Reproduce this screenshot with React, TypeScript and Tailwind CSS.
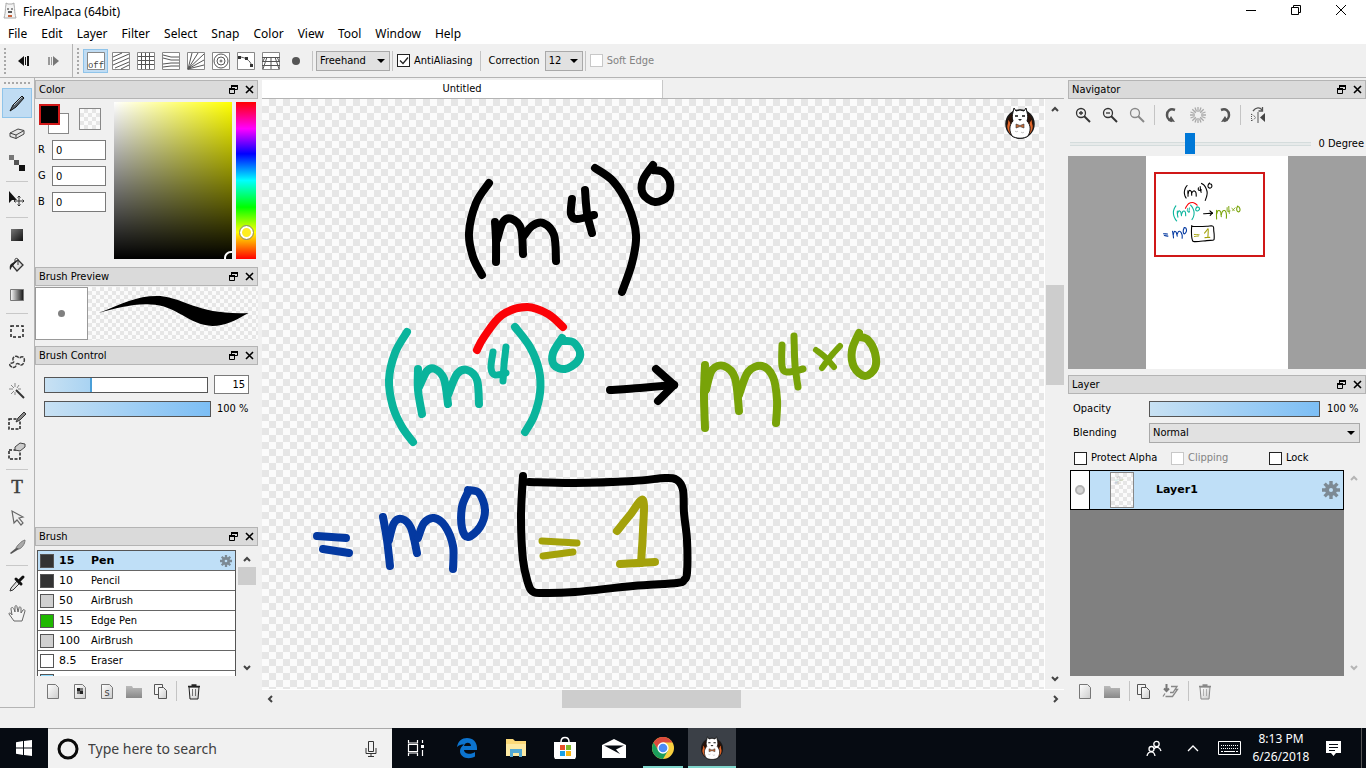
import React from "react";
import type { ReactNode } from "react";

type Pt = [number, number];
type Stroke = { c: string; w?: number; p: Pt[] };

const BLACK = "#000000";
const TEAL = "#0ab49c";
const GREEN = "#78a308";
const BLUE = "#0439a1";
const OLIVE = "#a4a20b";

const STROKES: Stroke[] = [
  { c: BLACK, p: [[489, 183], [476, 203], [469, 233], [473, 257], [482, 275]] },
  { c: BLACK, p: [[495, 222], [496, 240], [496, 262]] },
  { c: BLACK, p: [[497, 240], [503, 222], [512, 219], [521, 229], [523, 254]] },
  { c: BLACK, p: [[523, 237], [532, 226], [543, 223], [554, 235], [556, 261]] },
  { c: BLACK, p: [[572, 199], [571, 214], [577, 219], [594, 215]] },
  { c: BLACK, p: [[585, 190], [587, 213], [592, 233]] },
  { c: BLACK, p: [[595, 168], [613, 181], [628, 205], [636, 235], [632, 263], [622, 292]] },
  { c: BLACK, p: [[653, 165], [643, 180], [643, 194], [655, 202], [668, 196], [670, 182], [663, 172], [653, 170]] },
  { c: TEAL, p: [[407, 332], [395, 353], [389, 380], [393, 407], [402, 427], [413, 442]] },
  { c: TEAL, p: [[418, 369], [418, 390], [422, 414]] },
  { c: TEAL, p: [[419, 387], [427, 371], [435, 369], [444, 379], [448, 404]] },
  { c: TEAL, p: [[448, 395], [457, 374], [467, 370], [477, 380], [479, 404]] },
  { c: TEAL, w: 7, p: [[493, 352], [491, 368], [495, 375], [506, 373]] },
  { c: TEAL, w: 7, p: [[506, 347], [504, 365], [503, 381]] },
  { c: TEAL, p: [[515, 327], [530, 347], [539, 370], [540, 393], [534, 416], [525, 432]] },
  { c: TEAL, p: [[562, 338], [553, 353], [554, 365], [565, 369], [577, 362], [580, 352], [573, 342], [563, 341]] },
  { c: "#fb0207", p: [[477, 350], [484, 337], [502, 315], [527, 307], [548, 314], [563, 327]] },
  { c: BLACK, p: [[610, 390], [640, 388], [674, 385]] },
  { c: BLACK, p: [[656, 369], [674, 385]] },
  { c: BLACK, p: [[674, 385], [658, 401]] },
  { c: GREEN, p: [[705, 365], [704, 395], [705, 428]] },
  { c: GREEN, p: [[706, 390], [712, 370], [724, 366], [735, 378], [739, 411]] },
  { c: GREEN, p: [[739, 395], [748, 372], [762, 366], [773, 377], [777, 400], [776, 423]] },
  { c: GREEN, w: 7, p: [[782, 345], [782, 366], [787, 372], [803, 369]] },
  { c: GREEN, w: 7, p: [[794, 336], [795, 365], [798, 387]] },
  { c: GREEN, w: 6, p: [[816, 350], [825, 357], [834, 367]] },
  { c: GREEN, w: 6, p: [[840, 346], [831, 356], [822, 368]] },
  { c: GREEN, p: [[859, 333], [852, 350], [854, 367], [865, 376], [875, 368], [875, 353], [868, 340], [860, 337]] },
  { c: BLUE, p: [[317, 536], [346, 538]] },
  { c: BLUE, p: [[323, 549], [349, 553]] },
  { c: BLUE, p: [[383, 517], [387, 540], [390, 566]] },
  { c: BLUE, p: [[389, 540], [394, 523], [402, 519], [411, 528], [417, 553]] },
  { c: BLUE, p: [[418, 538], [424, 523], [434, 518], [445, 526], [453, 546], [453, 569]] },
  { c: BLUE, p: [[468, 492], [462, 507], [462, 528], [468, 537], [480, 527], [485, 510], [479, 493], [468, 490]] },
  { c: BLACK, p: [[523, 476], [521, 517], [523, 560], [528, 583], [532, 591], [542, 593], [575, 592], [633, 586], [677, 583], [684, 580], [687, 573], [687, 540], [684, 513], [683, 490], [677, 480], [665, 478], [633, 481], [575, 483], [529, 482]] },
  { c: OLIVE, w: 7, p: [[542, 541], [577, 543]] },
  { c: OLIVE, w: 7, p: [[543, 556], [573, 552]] },
  { c: OLIVE, p: [[617, 531], [630, 515], [643, 500], [643, 530], [641, 563]] },
  { c: OLIVE, p: [[620, 564], [655, 562]] },
];

// Catmull-Rom spline through the pen samples
function curve(p: Pt[]): string {
  let d = `M${p[0][0]} ${p[0][1]}`;
  for (let i = 0; i < p.length - 1; i++) {
    const a = p[i - 1] ?? p[i];
    const b = p[i];
    const c = p[i + 1];
    const e = p[i + 2] ?? c;
    d += `C${b[0] + (c[0] - a[0]) / 6} ${b[1] + (c[1] - a[1]) / 6} ${c[0] - (e[0] - b[0]) / 6} ${c[1] - (e[1] - b[1]) / 6} ${c[0]} ${c[1]}`;
  }
  return d;
}

function Drawing({ className }: { className: string }) {
  return (
    <svg viewBox="262 99 782 589" className={className} fill="none" strokeLinecap="round" strokeLinejoin="round">
      {STROKES.map((s, i) => (
        <path key={i} d={curve(s.p)} stroke={s.c} strokeWidth={s.w ?? 8} />
      ))}
    </svg>
  );
}

const CHECK = "bg-[repeating-conic-gradient(#e6e6e6_0_25%,#fbfbfb_0_50%)]";

function Svg({ size = 18, children }: { size?: number; children: ReactNode }) {
  return (
    <svg width={size} height={size} viewBox={`0 0 ${size} ${size}`} fill="none" className="block shrink-0">
      {children}
    </svg>
  );
}

function Llama({ size }: { size: number }) {
  return (
    <svg width={size} height={size} viewBox="0 0 32 32" className="block shrink-0">
      <circle cx="16" cy="17" r="14" fill="#2a1208" stroke="#1a1a1a" strokeWidth="1.500" />
      <path d="M4 23c-2-5 1-6 0-10 3 2 2 5 4 6 0-4 1-6 3-8v18c-4-1-6-3-7-6zM28 23c2-5-1-6 0-10-3 2-2 5-4 6 0-4-1-6-3-8v18c4-1 6-3 7-6z" fill="#e4672a" />
      <path d="M9 5l1-4 2 3 4-1 4 1 2-3 1 4c1 4 1 6 0 9 4 4 4 10 1 15-4 3-12 3-16 0-3-5-3-11 1-15-1-3-1-5 0-9z" fill="#fff" stroke="#111" strokeWidth="1" strokeLinejoin="round" />
      <path d="M11 9h3M18 9h3" stroke="#111" strokeWidth="1.400" />
      <path d="M14 12h4l-2 2z" fill="#222" />
      <path d="M12 17l4 1.500 4-1.500v4l-4-1.500-4 1.500z" fill="#c46a38" stroke="#333" strokeWidth=".6" />
      <path d="M11 24c1 1 2 1 3 0M17 25c1 1 2 1 3 0" stroke="#bbb" fill="none" />
    </svg>
  );
}

function PanelTitle({ children }: { children: ReactNode }) {
  return (
    <header className="flex h-[19px] shrink-0 items-center border border-[#b4b4b4] bg-[#dadada] pl-[3px]">
      <h2 className="grow truncate leading-4">{children}</h2>
      <button aria-label="Float panel" className="flex w-4 justify-center">
        <Svg size={9}>
          <path d="M2.500 3V.5h6v4H6" stroke="#000" />
          <path d="M2 1h7M0 4h6" stroke="#000" strokeWidth="2" />
          <path d="M.5 3.500h5v5h-5z" stroke="#000" />
        </Svg>
      </button>
      <button aria-label="Close panel" className="flex w-4 justify-center">
        <Svg size={9}><path d="M1 1l7 7M8 1L1 8" stroke="#000" strokeWidth="1.600" /></Svg>
      </button>
    </header>
  );
}

function Chevron({ dir, faint }: { dir: "up" | "down" | "left" | "right"; faint?: boolean }) {
  const d = { up: "M1 6l3-3 3 3", down: "M1 2l3 3 3-3", left: "M6 1L3 4l3 3", right: "M2 1l3 3-3 3" }[dir];
  return <Svg size={8}><path d={d} stroke={faint ? "#b5b5b5" : "#444"} strokeWidth="2" /></Svg>;
}

function Gear({ size }: { size: number }) {
  return (
    <svg width={size} height={size} viewBox="0 0 18 18" className="block">
      <g stroke="#7d8a94" strokeWidth="3.400">
        <path d="M9 0v18M0 9h18M2.600 2.600l12.800 12.800M15.400 2.600L2.600 15.400" />
      </g>
      <circle cx="9" cy="9" r="6" fill="#7d8a94" />
      <circle cx="9" cy="9" r="2" fill="#bfdff7" />
    </svg>
  );
}

function Grip() {
  return <span className="h-[26px] w-[2px] bg-[repeating-linear-gradient(#a8a8a8_0_2px,transparent_2px_4px)]" />;
}

const SNAPS: { name: string; art: ReactNode }[] = [
  { name: "Parallel", art: <path d="M1 5l9-4M1 9l16-7M1 13l16-7M3 16l14-6M9 17l8-4" /> },
  { name: "Grid", art: <path d="M4.500 1v16M8.500 1v16M12.500 1v16M1 4.500h16M1 8.500h16M1 12.500h16" /> },
  { name: "Vanishing line", art: <path d="M1 3l8 2h8M1 6l8 2h8M1 12l8-1h8M1 15l8-1h8" /> },
  { name: "Radial", art: <path d="M1 17L5 1M1 17L11 1M1 17L17 2M1 17l16-9M1 17l16-4" /> },
  { name: "Concentric", art: <><circle cx="9" cy="9" r="7" /><circle cx="9" cy="9" r="4" /><circle cx="9" cy="9" r="1" /></> },
  { name: "Curve", art: <><path d="M2 5c6 0 11 3 13 9" /><path d="M1 4h3v3H1zM8 5h3v3H8zM13 12h3v3h-3z" fill="#333" stroke="none" /></> },
  { name: "Perspective", art: <path d="M0 5.500h18M0 9.500h18M0 13.500h18M5 5l-4 12M9 5v12M13 5l4 12M3 5l-2 4M15 5l2 4" /> },
];

const T = "#3c3c3c";
const TOOLS: ({ name: string; art: ReactNode } | null)[] = [
  { name: "Brush", art: <><path d="M2 17l3-6 9-9 2 2-8 9z" fill="#59636c" stroke="#111" /><path d="M6 11L14 3" stroke="#b8c6d0" /></> },
  { name: "Eraser", art: <><path d="M2 9l8-4 6 1.500v3.500l-8 4.500-6-2z" fill="#e4e4e4" stroke="#444" /><path d="M2 9l6 2 8-4.500M8 11v3.500" stroke="#444" /></> },
  { name: "Dot", art: <><path d="M1 1h5v5H1z" fill="#777" /><path d="M6 6h5v5H6z" fill="#555" /><path d="M11 11h6v6h-6z" fill="#111" /></> },
  null,
  { name: "Move", art: <><path d="M1 1v12l3-3 5 0z" fill="#111" /><path d="M11 6v10M6 11h10M9.500 7.500L11 6l1.500 1.500M9.500 14.500L11 16l1.500-1.500M7.500 9.500L6 11l1.500 1.500M14.500 9.500L16 11l-1.500 1.500" stroke="#333" /></> },
  null,
  { name: "Fill shape", art: <path d="M3 3h12v12H3z" fill="url(#dark)" /> },
  { name: "Bucket", art: <><path d="M4 9l6-5 5 5-6 6z" fill="url(#paper)" stroke="#333" strokeWidth="1.300" /><path d="M7 7V3.500c0-1.500 3-1.500 3 0V9" stroke="#333" /><path d="M9 4L3 8c-2 2-1 5-1 6 1 0 1-3 3-4z" fill="#222" /></> },
  { name: "Gradient", art: <path d="M2.500 3.500h13v11h-13z" fill="url(#ramp)" stroke="#777" /> },
  null,
  { name: "Select", art: <path d="M3 4h12v11H3z" stroke="#222" strokeWidth="1.500" strokeDasharray="3 2" /> },
  { name: "Lasso", art: <path d="M4 15c-3-1-3-4 0-4 2 0 2-2 1-3-1-3 3-5 5-3 1 1 2 1 3 0 3-1 4 2 3 5s-3 4-5 2c-2-1-3 0-3 1 0 2-2 3-4 2z" stroke={T} strokeWidth="1.500" strokeDasharray="4 1" /> },
  { name: "Magic wand", art: <><path d="M8 8l8 8" stroke="#333" strokeWidth="2" /><path d="M7 1v4M1 7h4M3 3l3 3M11 3L9 6M3 12l3-3M7 10v3M10 7h3" stroke="#888" /></> },
  { name: "Select pen", art: <><path d="M1 7h11v10H1z" stroke="#222" strokeWidth="1.500" strokeDasharray="3 1.500" /><path d="M8 10l2-4 6-6 2 2-6 6z" fill="#888" stroke="#333" /></> },
  { name: "Select eraser", art: <><path d="M1 8h11v9H1z" stroke="#222" strokeWidth="1.500" strokeDasharray="3 1.500" /><path d="M7 5l5-4 5 1v3l-5 4-5-1z" fill="#ccc" stroke="#444" /></> },
  null,
  { name: "Text", art: <text x="9" y="15" textAnchor="middle" fontSize="19" fill={T} stroke={T} strokeWidth=".5" className="font-['Liberation_Serif',serif]">T</text> },
  { name: "Operation", art: <path d="M4 3l2 12 3-3 4 5 2-2-4-5 4-1z" fill="#eee" stroke="#666" strokeWidth="1.200" /> },
  { name: "Divide", art: <><path d="M17 2c-4 1-8 6-9 8l3 1c3-1 6-5 6-9z" fill="#aaa" stroke="#777" /><path d="M8 10l-6 5 1 1 8-5z" fill="#555" /></> },
  null,
  { name: "Eyedropper", art: <><path d="M9 7l-6 7-1 3 3-1 6-6z" fill="#ddd" stroke="#333" /><path d="M8 5l5 5M11 7l4-4" stroke="#111" strokeWidth="3" strokeLinecap="round" /></> },
  { name: "Hand", art: <path d="M6 17l-5-7c0-2 2-1 3 1L3 5c0-2 2-2 3 0l1 3V3c0-2 2-2 2 0l1 5 1-4c0-2 2-1 2 0v5l2-3c1-1 2 0 2 1l-3 10z" fill="#f3f3f3" stroke="#666" /> },
];

const BRUSHES = [
  { size: "15", name: "Pen", on: true, swatch: "bg-[#333]" },
  { size: "10", name: "Pencil", swatch: "bg-[#333]" },
  { size: "50", name: "AirBrush", swatch: "bg-[#d0d0d0]" },
  { size: "15", name: "Edge Pen", swatch: "bg-[#1fb800]" },
  { size: "100", name: "AirBrush", swatch: "bg-[#d0d0d0]" },
  { size: "8.5", name: "Eraser", swatch: "bg-white" },
  { size: "", name: "", swatch: "bg-[#8fdcff]" },
];

const page = <path d="M3.500 2.500h8l3 3v11h-11z" fill="url(#paper)" stroke="#777" />;
const folder = <path d="M1 4h6l1 2h9v10H1z" fill="url(#fold)" />;
const copy = <><path d="M2.500 2.500h8v10h-8z" fill="#f4f4f4" stroke="#555" /><path d="M6.500 5.500h5l3 3v8h-8z" fill="url(#paper)" stroke="#555" /></>;
const trash = (c: string) => <><path d="M4 5l1 12h8l1-12z" fill="url(#paper)" stroke={c} /><path d="M3 4.500h12M6.500 3h5" stroke={c} strokeWidth="1.300" /><path d="M7.500 7v7M10.500 7v7" stroke={c} opacity=".6" /></>;

function IconBtn({ label, children }: { label: string; children: ReactNode }) {
  return (
    <button aria-label={label} className="flex w-[27px] justify-center"><Svg size={18}>{children}</Svg></button>
  );
}

function Divider() {
  return <span className="block h-5 w-px bg-[#c4c4c4]" />;
}

const BAR = "block appearance-none border border-[#555] [&::-webkit-slider-thumb]:w-0 [&::-webkit-slider-thumb]:appearance-none";

function Tick({ label, checked, disabled, className = "" }: { label: string; checked?: boolean; disabled?: boolean; className?: string }) {
  return (
    <label className={`flex items-center gap-1 whitespace-nowrap leading-4 ${disabled ? "text-[#838383]" : ""} ${className}`}>
      <span className="grid">
        <input type="checkbox" defaultChecked={checked} disabled={disabled} className="col-start-1 row-start-1 size-[13px] appearance-none border border-[#222] bg-white disabled:border-[#c8c8c8]" />
        {checked && (
          <svg viewBox="0 0 13 13" className="pointer-events-none col-start-1 row-start-1 size-[13px]"><path d="M3 6.500l3 3 5-6" stroke="#222" fill="none" strokeWidth="1.300" /></svg>
        )}
      </span>
      {label}
    </label>
  );
}

function Drop({ label, value, className }: { label: string; value: string; className: string }) {
  return (
    <span className={`grid items-center ${className}`}>
      <select aria-label={label} className="col-start-1 row-start-1 h-5 w-full appearance-none border border-[#a9a9a9] bg-[#e1e1e1] pl-[3px] leading-4">
        <option>{value}</option>
      </select>
      <svg viewBox="0 0 8 4" className="pointer-events-none col-start-1 row-start-1 mr-[5px] h-1 w-2 justify-self-end"><path d="M0 0h8L4 4z" /></svg>
    </span>
  );
}

function TitleBar() {
  return (
    <header className="flex h-6 items-start bg-white pr-[2px] pl-[3px] font-['Noto_Sans',sans-serif] text-[12px]">
      <svg width="14" height="20" viewBox="0 0 14 20">
        <path d="M3 5V3l2 1h4l2-1v2c1 3 0 6 2 13H1C3 11 2 8 3 5z" fill="#f4f4f4" stroke="#aaa" />
        <path d="M4 9h2M8 9h2" stroke="#333" /><path d="M5 11h4v2H5z" fill="#555" /><path d="M5 15h4v2H5z" fill="#c8623a" />
      </svg>
      <h1 className="ml-[6px] grow pt-1 leading-4">FireAlpaca (64bit)</h1>
      <button aria-label="Minimize" className="flex h-5 w-[45px] items-center justify-center"><Svg size={10}><path d="M0 5.500h10" stroke="#000" /></Svg></button>
      <button aria-label="Restore" className="flex h-5 w-[45px] items-center justify-center"><Svg size={10}><path d="M2.500 2V.5h7v7H8M.5 2.500h7v7h-7z" stroke="#000" /></Svg></button>
      <button aria-label="Close" className="flex h-5 w-[46px] items-center justify-center"><Svg size={12}><path d="M1 1l10 10M11 1L1 11" stroke="#000" /></Svg></button>
    </header>
  );
}

function MenuBar() {
  const items = ["File", "Edit", "Layer", "Filter", "Select", "Snap", "Color", "View", "Tool", "Window", "Help"];
  return (
    <nav className="flex h-5 items-center gap-[14px] bg-white pl-2 font-['Noto_Sans',sans-serif] text-[12px] leading-4">
      {items.map((m) => <button key={m}>{m}</button>)}
    </nav>
  );
}

function ToolOptions() {
  return (
    <div className="flex h-[34px] items-center border-b border-[#b4b4b4] pl-1 leading-4">
      <Grip />
      <div className="flex h-full w-[67px] items-center justify-around border-r border-[#b4b4b4] px-[3px]">
        <button aria-label="Undo"><Svg size={12}><path d="M6 1v10L0 6z" fill="#111" /><path d="M7 2h1v8H7zM9 1h2v10H9z" fill="#111" /></Svg></button>
        <button aria-label="Redo"><Svg size={12}><path d="M5 1v10l6-5z" fill="#777" /><path d="M0 2h2v8H0zM3 2h1v8H3z" fill="#999" /></Svg></button>
      </div>
      <span className="w-1" />
      <Grip />
      <div className="ml-1 flex items-center">
        <button aria-label="Snap off" className="flex h-6 w-[25px] items-center justify-center border border-[#8fc4ea] bg-[#c0dcf3]">
          <svg width="18" height="18" viewBox="0 0 18 18"><path d="M.5.5h17v17H.5z" fill="#fff" stroke="#888" /><text x="9" y="16" textAnchor="middle" fontSize="9" fill="#444" className="font-['Liberation_Mono',monospace]">off</text></svg>
        </button>
        {SNAPS.map((s) => (
          <button key={s.name} aria-label={s.name} className="flex w-[25px] justify-center">
            <Svg size={18}><path d="M.5.5h17v17H.5z" fill="#fff" stroke="#888" /><g stroke="#555">{s.art}</g></Svg>
          </button>
        ))}
        <button aria-label="Snap settings" className="flex w-[25px] justify-center"><Svg size={8}><circle cx="4" cy="4" r="4" fill="#555" /></Svg></button>
      </div>
      <span className="mr-[3px] ml-1"><Divider /></span>
      <Drop label="Stroke type" value="Freehand" className="w-[74px]" />
      <span className="mr-1 ml-[2px]"><Divider /></span>
      <Tick label="AntiAliasing" checked />
      <span className="mr-[7px] ml-2"><Divider /></span>
      <span>Correction</span>
      <Drop label="Correction" value="12" className="ml-[5px] w-[38px]" />
      <span className="mr-1 ml-[2px]"><Divider /></span>
      <Tick label="Soft Edge" disabled />
    </div>
  );
}

function ToolBox() {
  return (
    <aside className="flex w-[35px] shrink-0 flex-col items-center border-r border-b border-[#b4b4b4] pt-1">
      <span className="h-[2px] w-[26px] bg-[repeating-linear-gradient(90deg,#a8a8a8_0_2px,transparent_2px_4px)]" />
      <div className="mt-1 flex w-full flex-col px-[2px]">
        {TOOLS.map((t, i) =>
          t ? (
            <button key={i} aria-label={t.name} className={`flex h-[30px] items-center justify-center ${i === 0 ? "border border-[#8fc4ea] bg-[#c0dcf3]" : ""}`}>
              <Svg size={18}>{t.art}</Svg>
            </button>
          ) : (
            <span key={i} className="flex h-[6px] items-center px-1"><span className="h-px w-full bg-[#c8c8c8]" /></span>
          ),
        )}
      </div>
    </aside>
  );
}

function LeftDock() {
  return (
    <aside className="flex w-[223px] shrink-0 flex-col pt-[2px]">
      <PanelTitle>Color</PanelTitle>
      <section className="flex h-[168px] gap-1 pt-[3px] pr-[2px] pl-[3px]">
        <div className="w-[72px]">
          <div className="flex items-start">
            <div className="grid">
              <span className="col-start-1 row-start-1 mt-[11px] ml-[10px] size-[21px] border border-[#888] bg-white" />
              <span className="z-10 col-start-1 row-start-1 mt-[2px] ml-px size-[21px] border-2 border-[#d01818] bg-black" />
            </div>
            <span className={`mt-[6px] ml-[10px] size-[22px] border border-[#888] bg-[length:8px_8px] ${CHECK}`} />
          </div>
          <div className="mt-[6px] flex flex-col gap-[6px]">
            {["R", "G", "B"].map((c) => (
              <label key={c} className="flex h-5 items-center">
                <span className="w-[14px]">{c}</span>
                <input defaultValue="0" className="h-5 w-[54px] border border-[#7a7a7a] bg-white px-[3px] leading-4" />
              </label>
            ))}
          </div>
        </div>
        <div className="relative h-[157px] grow overflow-hidden bg-[linear-gradient(to_top,#000,transparent),linear-gradient(to_right,#fff,#ff0)]">
          <span className="absolute -right-[6px] -bottom-[6px] size-[14px] rounded-full border-2 border-white" />
        </div>
        <div className="relative h-[157px] w-5 bg-[linear-gradient(#f00,#f0f_17%,#00f_33%,#0ff_50%,#0f0_67%,#ff0_83%,#f00)]">
          <span className="absolute top-[124px] left-1 size-[13px] rounded-full border-2 border-white bg-[#ffee20] outline outline-[#888]" />
        </div>
      </section>

      <PanelTitle>Brush Preview</PanelTitle>
      <section className="flex h-[60px] pt-px">
        <div className="flex size-[53px] items-center justify-center border border-[#999] bg-white"><span className="size-[7px] rounded-full bg-[#808080]" /></div>
        <div className={`h-[53px] grow bg-[length:8px_8px] ${CHECK}`}>
          <svg viewBox="0 0 169 53" className="size-full"><path d="M10 26C35 16 50 8 72 9c26 3 38 19 88 17-14 8-24 13-36 13C100 38 88 18 62 17.500c-18-1-34 4-52 8.500z" /></svg>
        </div>
      </section>

      <PanelTitle>Brush Control</PanelTitle>
      <section className="flex h-[162px] flex-col gap-2 pt-[11px] pr-2 pl-[9px] leading-4">
        <div className="flex h-[17px] items-center gap-[6px]">
          <input type="range" aria-label="Brush size" defaultValue={29} className={`${BAR} h-4 w-[164px] bg-[linear-gradient(to_right,#c8e1f3,#a9d3f2_28%,#4a9fd8_28%,#4a9fd8_29%,#fff_29%)]`} />
          <input aria-label="Size" defaultValue="15" className="h-[19px] w-[35px] border border-[#7a7a7a] bg-white pr-[3px] text-right" />
        </div>
        <div className="flex h-4 items-center gap-[6px]">
          <input type="range" aria-label="Brush opacity" defaultValue={100} className={`${BAR} h-4 w-[167px] bg-[linear-gradient(to_right,#c8e1f3,#7cbef5)]`} />
          <span className="whitespace-nowrap">100 %</span>
        </div>
      </section>

      <PanelTitle>Brush</PanelTitle>
      <section className="flex h-[131px] pt-1 pl-[2px]">
        <ul className="h-[126px] grow overflow-hidden border-x border-t border-[#555] leading-4">
          {BRUSHES.map((b, i) => (
            <li key={i} className={`flex h-5 items-center border-b border-[#666] pl-[2px] ${b.on ? "bg-[#bfdff7] font-['DejaVu_Sans',sans-serif] font-bold" : "bg-white"}`}>
              <span className={`size-[14px] border border-[#555] ${b.swatch}`} />
              <span className="w-[37px] pl-[5px] font-['DejaVu_Sans',sans-serif]">{b.size}</span>
              <span className="grow">{b.name}</span>
              {b.on && <span className="mr-[3px]"><Gear size={12} /></span>}
            </li>
          ))}
        </ul>
        <div className="flex w-[22px] flex-col items-center py-[5px]">
          <Chevron dir="up" />
          <span className="mt-1 h-[18px] w-[18px] bg-[#cdcdcd]" />
          <span className="grow" />
          <Chevron dir="down" />
        </div>
      </section>
      <section className="flex items-center py-1 pl-1">
        <IconBtn label="New brush">{page}</IconBtn>
        <IconBtn label="New bitmap brush">{page}<path d="M6 6h3v3H6zM9 9h3v3H9z" fill="#222" /><path d="M9 6h3v3H9zM6 9h3v3H6z" fill="#777" /></IconBtn>
        <IconBtn label="New script brush">{page}<text x="9" y="14" textAnchor="middle" fontSize="11" fill="#444">s</text></IconBtn>
        <IconBtn label="New folder">{folder}</IconBtn>
        <IconBtn label="Duplicate brush">{copy}</IconBtn>
        <span className="ml-[2px]"><Divider /></span>
        <span className="ml-[3px] flex"><IconBtn label="Delete brush">{trash("#222")}</IconBtn></span>
      </section>
    </aside>
  );
}

function CanvasArea() {
  return (
    <main className="mx-1 flex min-w-0 grow flex-col pt-[2px]">
      <div className="flex h-[19px] border-b border-[#b4b4b4]">
        <button className="w-1/2 border-r border-[#c8c8c8] bg-white text-center leading-4">Untitled</button>
      </div>
      <div className="flex grow">
        <div className={`relative min-w-0 grow bg-[length:14px_14px] ${CHECK}`}>
          <Drawing className="block h-auto w-full" />
          <span className="absolute top-2 right-2"><Llama size={32} /></span>
        </div>
        <div className="flex w-[20px] flex-col items-center border-l border-white py-[6px]">
          <Chevron dir="up" />
          <span className="h-[172px]" />
          <span className="h-[100px] w-[18px] bg-[#cdcdcd]" />
          <span className="grow" />
          <Chevron dir="down" />
        </div>
      </div>
      <div className="flex h-[19px] items-center border-t border-white px-1">
        <Chevron dir="left" />
        <span className="grow-[287]" />
        <span className="h-[18px] w-[179px] bg-[#cdcdcd]" />
        <span className="grow-[310]" />
        <Chevron dir="right" />
      </div>
    </main>
  );
}

function Magnifier({ c, sign }: { c: string; sign?: string }) {
  return <><circle cx="7" cy="7" r="4.500" stroke={c} strokeWidth="1.300" fill="#eee" /><path d="M10 10l6 6" stroke={c} strokeWidth="2" />{sign && <path d={sign} stroke={c} strokeWidth="1.300" />}</>;
}

function RightDock() {
  return (
    <aside className="flex w-[298px] shrink-0 flex-col pt-[2px] leading-4">
      <PanelTitle>Navigator</PanelTitle>
      <section className="flex h-8 items-center pl-[1px]">
        <IconBtn label="Zoom in"><Magnifier c="#333" sign="M5 7h4M7 5v4" /></IconBtn>
        <IconBtn label="Zoom out"><Magnifier c="#333" sign="M5 7h4" /></IconBtn>
        <IconBtn label="Fit"><Magnifier c="#888" /></IconBtn>
        <span className="ml-1"><Divider /></span>
        <span className="ml-[2px] flex">
          <IconBtn label="Rotate left"><path d="M13 4C8 2 5 5 5 9s2 5 5 6" stroke="#555" strokeWidth="2.500" /><path d="M6 15l7 1-4-6z" fill="#555" /></IconBtn>
          <IconBtn label="Reset rotation">
            <g stroke="#aaa" strokeWidth="1.300"><path d="M9 1v5M9 12v5M1 9h5M12 9h5M3.300 3.300l3.500 3.500M11.200 11.200l3.500 3.500M3.300 14.700l3.500-3.500M11.200 6.800l3.500-3.500M6 1.500l1.500 4M10.500 12.500l1.500 4M1.500 12l4-1.500M12.500 7.500l4-1.500M12 1.500l-1.500 4M7.500 12.500L6 16.500M1.500 6l4 1.500M12.500 10.500l4 1.500" /></g>
          </IconBtn>
          <IconBtn label="Rotate right"><path d="M5 4c5-2 8 1 8 5s-2 5-5 6" stroke="#555" strokeWidth="2.500" /><path d="M12 15l-7 1 4-6z" fill="#555" /></IconBtn>
        </span>
        <span className="ml-[2px]"><Divider /></span>
        <span className="ml-[3px] flex"><IconBtn label="Flip view"><path d="M9 6v11" stroke="#555" /><path d="M16 7v9l-5-4.500z" fill="#444" /><path d="M2.500 8v7L7 11.500z" stroke="#555" strokeDasharray="1 1" /><path d="M4 5c3-4 7-4 9-1M13.500 1v4h-4" stroke="#555" strokeWidth="1.300" /></IconBtn></span>
      </section>
      <section className="flex h-[25px] items-center pr-[2px] pl-[2px]">
        <input type="range" aria-label="Rotation" min={-180} max={180} defaultValue={0} className="h-[21px] min-w-0 grow appearance-none bg-[linear-gradient(transparent_9px,#d4dcdc_9px_10px,#e7eaea_10px_12px,#d4dcdc_12px_13px,transparent_13px)] [&::-webkit-slider-thumb]:h-[21px] [&::-webkit-slider-thumb]:w-[10px] [&::-webkit-slider-thumb]:appearance-none [&::-webkit-slider-thumb]:bg-[#0078d7]" />
        <span className="ml-2">0 Degree</span>
      </section>
      <section className="flex h-[213px] justify-center bg-[#9f9f9f]">
        <div className="w-[142px] bg-white pt-4 pl-2">
          <div className="w-[111px] border-2 border-[#d01818]"><Drawing className="block h-auto w-full" /></div>
        </div>
      </section>
      <div className="h-[6px]" />
      <PanelTitle>Layer</PanelTitle>
      <section className="flex flex-col pt-[6px] pl-[5px]">
        <div className="flex h-[18px] items-center">
          <span className="w-[76px]">Opacity</span>
          <input type="range" aria-label="Opacity" defaultValue={100} className={`${BAR} h-4 w-[171px] bg-[linear-gradient(to_right,#c8e1f3,#7cbef5)]`} />
          <span className="ml-[7px]">100 %</span>
        </div>
        <div className="mt-1 flex h-[22px] items-center pr-[6px]">
          <span className="w-[76px]">Blending</span>
          <Drop label="Blending" value="Normal" className="grow" />
        </div>
        <div className="mt-[2px] flex h-6 items-center pl-px">
          <Tick label="Protect Alpha" className="w-[97px]" />
          <Tick label="Clipping" disabled className="w-[98px]" />
          <Tick label="Lock" />
        </div>
      </section>
      <section className="flex h-[206px] pl-[2px]">
        <div className="grow bg-[#808080]">
          <div className="flex h-10 items-center border border-black bg-[#bfdff7]">
            <span className="flex h-full w-[19px] items-center justify-center border-r border-black bg-white"><span className="size-[10px] rounded-full border-2 border-[#b4b4b4] bg-[#d4d4d4]" /></span>
            <span className={`ml-5 h-9 w-6 border border-[#888] bg-[length:8px_8px] pt-[2px] pr-[6px] pl-[2px] ${CHECK}`}><Drawing className="block h-auto w-full opacity-50" /></span>
            <span className="ml-[22px] grow font-['DejaVu_Sans',sans-serif] font-bold">Layer1</span>
            <span className="mr-[3px]"><Gear size={18} /></span>
          </div>
        </div>
        <div className="flex w-[22px] flex-col items-center justify-between py-1 pr-[2px]">
          <Chevron dir="up" faint />
          <Chevron dir="down" faint />
        </div>
      </section>
      <section className="flex items-center pt-[5px] pl-[3px]">
        <IconBtn label="New layer">{page}</IconBtn>
        <IconBtn label="New layer folder">{folder}</IconBtn>
        <span className="ml-1"><Divider /></span>
        <IconBtn label="Duplicate layer">{copy}</IconBtn>
        <IconBtn label="Merge layer"><path d="M3.500 14.500h7l5-7h-3M8 10.500h3l4-6H9M1 14.500l2-3" stroke="#888" strokeWidth="1.300" /><path d="M4.500 2v7M2 6.500L4.500 9 7 6.500" stroke="#777" strokeWidth="2" /></IconBtn>
        <span className="ml-1"><Divider /></span>
        <span className="ml-[2px] flex"><IconBtn label="Delete layer">{trash("#888")}</IconBtn></span>
      </section>
    </aside>
  );
}

function Taskbar() {
  const slot = "flex h-full items-center justify-center";
  return (
    <footer className="flex h-10 shrink-0 items-center bg-[#060b12] font-['Noto_Sans',sans-serif] text-white">
      <button aria-label="Start" className={`${slot} w-12`}><Svg size={16}><path d="M0 2.200L7 1v6.500H0zM8 .9L16 0v7.500H8zM0 8.500h7V15l-7-1.200zM8 8.500h8V16l-8-1z" fill="#fff" /></Svg></button>
      <label className="flex h-full w-[344px] items-center border-t border-[#a9a9a9] bg-[#f1f1f1] pr-3 pl-[9px]">
        <Svg size={22}><circle cx="11" cy="11" r="9" stroke="#0a0a0a" strokeWidth="3" /></Svg>
        <input aria-label="Search" placeholder="Type here to search" className="ml-[9px] min-w-0 grow bg-transparent text-[14px] leading-5 placeholder:text-[#404040]" />
        <Svg size={18}><path d="M6.500 1.500h5v10h-5zM4 8v5.500h10V8M9 14v3M6 16.500h6" stroke="#333" /></Svg>
      </label>
      <button aria-label="Task view" className={`${slot} w-12`}><Svg size={18}><path d="M1.500 1v3h9V1M1.500 17v-3h9v3M1.500 5.500h9v7h-9zM15.500 1v3M15.500 11v6" stroke="#fff" strokeWidth="1.200" /><path d="M14 6h3v3h-3z" fill="#fff" /></Svg></button>
      <button aria-label="Edge" className={`${slot} ml-[2px] w-[50px]`}><Svg size={22}><path d="M1 10C2 4 6 1 11 1c6 0 10 4 10 10v2H8c0 4 7 5 11 2v4.500C13 23 4 21 4 14c0-3 2-5 4-6.500C5 7.500 3 8 1 10zM8 9h7c0-4-6-4.500-7 0z" fill="#0c74cf" /></Svg></button>
      <button aria-label="File Explorer" className={`${slot} w-12`}><Svg size={22}><path d="M1 2h7l2 2h11v15H1z" fill="#fbd979" /><path d="M1 7h20v12H1z" fill="#fdeaa4" /><path d="M5 12h12v8h-3v-4H8v4H5z" fill="#52a9d4" /></Svg></button>
      <button aria-label="Store" className={`${slot} w-[49px]`}><Svg size={24}><path d="M8 6c0-6 8-6 8 0" stroke="#fff" strokeWidth="1.500" /><path d="M1 6h22v15l-1 2H2l-1-2z" fill="#fff" /><path d="M7 9h5v5H7z" fill="#e8502a" /><path d="M13 9h5v5h-5z" fill="#7fb928" /><path d="M7 15h5v5H7z" fill="#1ba1e6" /><path d="M13 15h5v5h-5z" fill="#fbb813" /></Svg></button>
      <button aria-label="Mail" className={`${slot} w-[49px]`}><Svg size={24}><path d="M0 9l12-6 12 6v13H0z" fill="#fff" /><path d="M2 9.500h20L14 13.500l4 4.500z" fill="#060b12" /></Svg></button>
      <button aria-label="Chrome" className={`${slot} ml-[5px] w-10 border-b-2 border-[#7fd6cc] pt-[2px]`}>
        <Svg size={24}><circle cx="12" cy="12" r="11" fill="#f9d03f" /><path d="M2.500 6.500A11 11 0 0 1 21.500 6.500H12L7 14z" fill="#dc4a3d" /><path d="M2.500 6.500A11 11 0 0 0 12 23l5-8.500H7.500z" fill="#1b9d5b" /><circle cx="12" cy="12" r="5" fill="#4c8bf5" stroke="#fff" strokeWidth="1.300" /></Svg>
      </button>
      <button aria-label="FireAlpaca" className={`${slot} ml-[5px] w-12 border-b-2 border-[#7fd6cc] bg-[#3b4047] pt-[2px]`}><Llama size={24} /></button>
      <span className="grow" />
      <button aria-label="People" className={`${slot} w-[38px]`}><Svg size={16}><circle cx="10.500" cy="4" r="2.700" stroke="#fff" strokeWidth="1.300" /><path d="M8 9c2-3 6-2 7 2" stroke="#fff" strokeWidth="1.300" /><circle cx="5.500" cy="9" r="2.500" stroke="#fff" strokeWidth="1.300" /><path d="M1 16c1-5 7-6 8 0" stroke="#fff" strokeWidth="1.300" /></Svg></button>
      <button aria-label="Show hidden icons" className={`${slot} w-10`}><Svg size={12}><path d="M1 9l5-5 5 5" stroke="#fff" strokeWidth="1.300" /></Svg></button>
      <button aria-label="Keyboard" className={`${slot} w-8`}>
        <svg width="23" height="14" viewBox="0 0 23 14" fill="none" stroke="#fff"><path d="M.5.5h22v13H.5z" /><path d="M3 4.500h17M3 7.500h17" strokeDasharray="1 1" /><path d="M3 10.500h2M6 10.500h11M18 10.500h2" /></svg>
      </button>
      <div className="w-[72px] text-center text-[12px] leading-[18px]"><p>8:13 PM</p><p>6/26/2018</p></div>
      <button aria-label="Notifications" className={`${slot} w-8`}><Svg size={17}><path d="M1 1h15v12h-5l-2.500 3L6 13H1z" fill="#fff" /><path d="M4 4.500h9M4 7.500h9M4 10.500h6" stroke="#060b12" /></Svg></button>
      <span className="ml-3 h-full w-[5px] border-l border-[#555]" />
    </footer>
  );
}

export default function App() {
  return (
    <div className="flex min-h-screen flex-col bg-[#f0f0f0] font-['DejaVu_Sans_Condensed','Noto_Sans',sans-serif] text-[11px] text-black">
      <svg width="0" height="0" className="absolute">
        <defs>
          <linearGradient id="dark" x2="1" y2="1"><stop stopColor="#777" /><stop offset="1" stopColor="#111" /></linearGradient>
          <linearGradient id="ramp"><stop stopColor="#fff" /><stop offset="1" stopColor="#111" /></linearGradient>
          <linearGradient id="paper" x2="1" y2="1"><stop stopColor="#fff" /><stop offset="1" stopColor="#ccc" /></linearGradient>
          <linearGradient id="fold" x2="0" y2="1"><stop stopColor="#bbb" /><stop offset="1" stopColor="#888" /></linearGradient>
        </defs>
      </svg>
      <TitleBar />
      <MenuBar />
      <ToolOptions />
      <div className="flex grow">
        <ToolBox />
        <LeftDock />
        <CanvasArea />
        <RightDock />
      </div>
      <div className="h-5 shrink-0" />
      <Taskbar />
    </div>
  );
}
